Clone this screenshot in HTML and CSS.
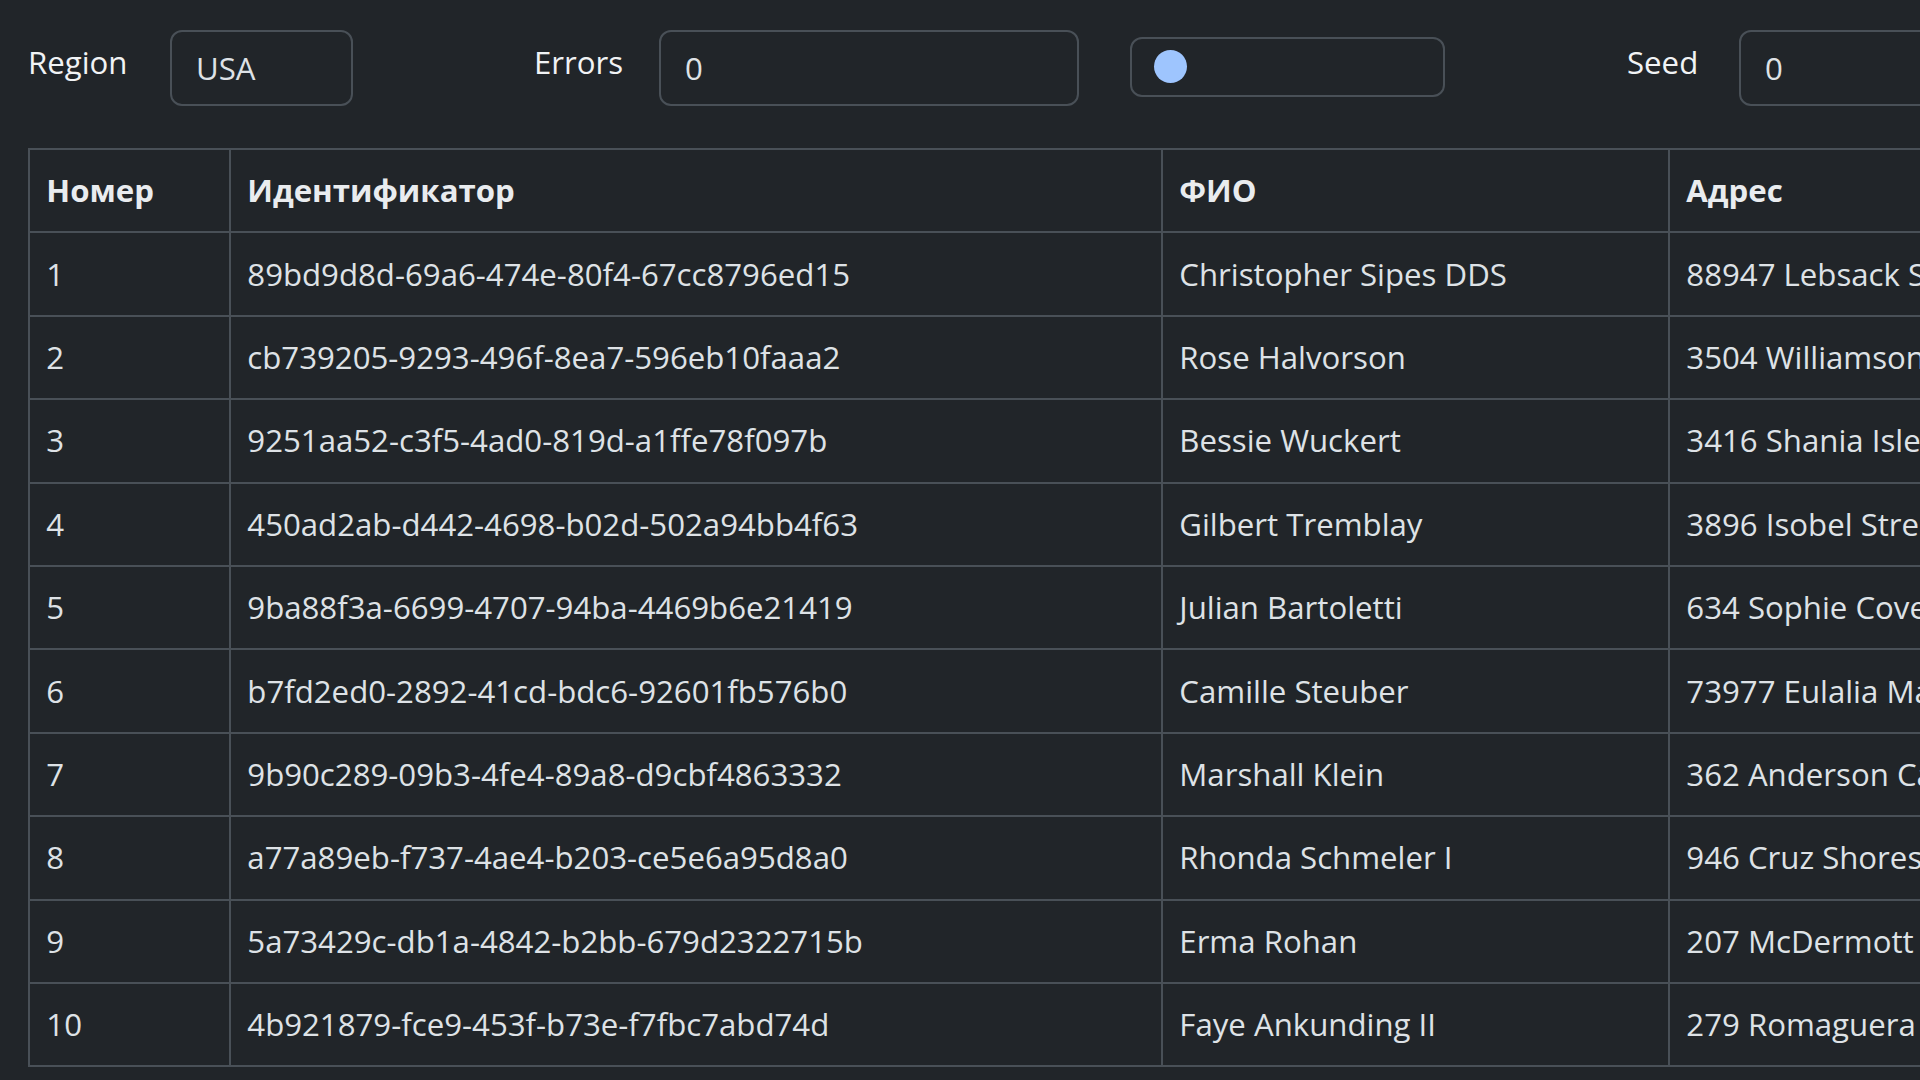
FILE: index.html
```html
<!DOCTYPE html>
<html lang="ru">
<head>
<meta charset="utf-8">
<title>Fake data generator</title>
<link rel="stylesheet" href="styles.css">
</head>
<body>
<div class="page">
  <form class="controls">
    <label class="ctl-label lbl-region">Region</label>
    <input class="field field-region" type="text" value="USA">
    <label class="ctl-label lbl-errors">Errors</label>
    <input class="field field-errors" type="text" value="0">
    <div class="range-box"><input class="range" type="range" min="0" max="10" step="0.25" value="0"></div>
    <label class="ctl-label lbl-seed">Seed</label>
    <input class="field field-seed" type="text" value="0">
  </form>
  <table class="data">
    <colgroup>
      <col class="c-num"><col class="c-id"><col class="c-name"><col class="c-addr">
    </colgroup>
    <thead>
      <tr><th>Номер</th><th>Идентификатор</th><th>ФИО</th><th>Адрес</th></tr>
    </thead>
    <tbody>
      <tr><td>1</td><td>89bd9d8d-69a6-474e-80f4-67cc8796ed15</td><td>Christopher Sipes DDS</td><td>88947 Lebsack Squares</td></tr>
      <tr><td>2</td><td>cb739205-9293-496f-8ea7-596eb10faaa2</td><td>Rose Halvorson</td><td>3504 Williamson Drive</td></tr>
      <tr><td>3</td><td>9251aa52-c3f5-4ad0-819d-a1ffe78f097b</td><td>Bessie Wuckert</td><td>3416 Shania Isle</td></tr>
      <tr><td>4</td><td>450ad2ab-d442-4698-b02d-502a94bb4f63</td><td>Gilbert Tremblay</td><td>3896 Isobel Street</td></tr>
      <tr><td>5</td><td>9ba88f3a-6699-4707-94ba-4469b6e21419</td><td>Julian Bartoletti</td><td>634 Sophie Cove</td></tr>
      <tr><td>6</td><td>b7fd2ed0-2892-41cd-bdc6-92601fb576b0</td><td>Camille Steuber</td><td>73977 Eulalia Mall</td></tr>
      <tr><td>7</td><td>9b90c289-09b3-4fe4-89a8-d9cbf4863332</td><td>Marshall Klein</td><td>362 Anderson Camp</td></tr>
      <tr><td>8</td><td>a77a89eb-f737-4ae4-b203-ce5e6a95d8a0</td><td>Rhonda Schmeler I</td><td>946 Cruz Shores</td></tr>
      <tr><td>9</td><td>5a73429c-db1a-4842-b2bb-679d2322715b</td><td>Erma Rohan</td><td>207 McDermott Road</td></tr>
      <tr><td>10</td><td>4b921879-fce9-453f-b73e-f7fbc7abd74d</td><td>Faye Ankunding II</td><td>279 Romaguera Lane</td></tr>
    </tbody>
  </table>
</div>
</body>
</html>
```
FILE: styles.css
```css
html, body {
  margin: 0;
  padding: 0;
  background: #212529;
  overflow: hidden;
}
body {
  color: #dee2e6;
  font-family: "Open Sans", "Noto Sans", "Liberation Sans", sans-serif;
  font-size: 31.2px;
  line-height: 48.8px;
}
.page {
  padding: 30px 0 0 28px;
  width: 2400px;
}
.controls {
  display: flex;
  align-items: flex-start;
  height: 76px;
}
.ctl-label {
  display: block;
  margin-top: 8px;
  white-space: nowrap;
  color: #f1f3f5;
}
.lbl-region { width: 142px; }
.lbl-errors { width: 125px; margin-left: 181px; }
.lbl-seed { width: 112px; margin-left: 182px; }
.field {
  box-sizing: border-box;
  height: 76px;
  margin: 0;
  padding: 12px 24px;
  border: 2px solid #495057;
  border-radius: 12px;
  background: #212529;
  color: #dee2e6;
  font: inherit;
  line-height: 48.8px;
  outline: none;
}
.field-region { width: 183px; }
.field-errors { width: 420px; }
.field-seed { width: 420px; }
.range-box {
  box-sizing: border-box;
  width: 315px;
  height: 60px;
  margin: 7px 0 0 51px;
  padding: 0 22px;
  border: 2px solid #495057;
  border-radius: 12px;
  display: flex;
  align-items: center;
}
.range {
  -webkit-appearance: none;
  appearance: none;
  width: 100%;
  height: 34px;
  margin: 0;
  background: transparent;
}
.range::-webkit-slider-runnable-track {
  height: 34px;
  background: transparent;
  border: none;
}
.range::-webkit-slider-thumb {
  -webkit-appearance: none;
  appearance: none;
  width: 33px;
  height: 33px;
  border-radius: 50%;
  background: #9ec5fe;
  border: none;
}
.data {
  margin-top: 42px;
  border-collapse: collapse;
  table-layout: fixed;
  width: 2240px;
}
.c-num { width: 201px; }
.c-id { width: 932px; }
.c-name { width: 507px; }
.c-addr { width: 600px; }
.data th, .data td {
  border: 2px solid #495057;
  padding: 16.3px 16.3px;
  text-align: left;
  white-space: nowrap;
  overflow: hidden;
  height: 48.8px;
}
.data th {
  font-weight: 700;
  color: #e9ecef;
}
```
